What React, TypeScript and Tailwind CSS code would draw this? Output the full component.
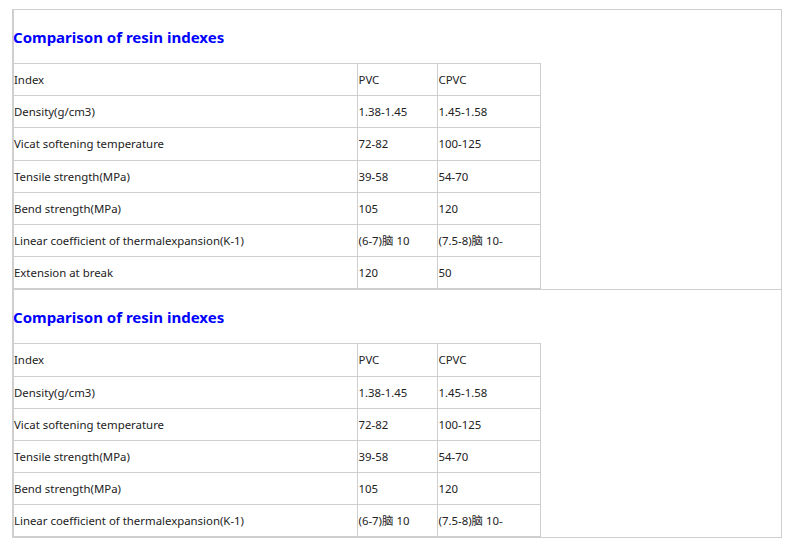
import React from 'react';

const rows: [string, string, string][] = [
  ['Index', 'PVC', 'CPVC'],
  ['Density(g/cm3)', '1.38-1.45', '1.45-1.58'],
  ['Vicat softening temperature', '72-82', '100-125'],
  ['Tensile strength(MPa)', '39-58', '54-70'],
  ['Bend strength(MPa)', '105', '120'],
  ['Linear coefficient of thermalexpansion(K-1)', '(6-7)脑 10', '(7.5-8)脑 10-'],
  ['Extension at break', '120', '50'],
];

const ResinSection = ({ count, first }: { count: number; first?: boolean }) => (
  <div className={`border-l-2 border-r border-b border-[#cfcfcf] ${first ? 'border-t' : ''} pt-[17px]`}>
    <h2 className="text-[15px] leading-[20px] font-bold text-[#0000ff] -ml-px mb-[16px]">
      Comparison of resin indexes
    </h2>
    <table className="border-collapse w-[527px] text-[11.4px] text-[#222]">
      <tbody>
        {rows.slice(0, count).map((r, i) => (
          <tr key={i} className="h-[32.2px]">
            <td className="w-[343px] border border-l-0 border-[#cfcfcf] align-middle">{r[0]}</td>
            <td className="w-[80px] border border-[#cfcfcf] pl-[1px] align-middle">{r[1]}</td>
            <td className="border border-[#cfcfcf] pl-[1px] align-middle">{r[2]}</td>
          </tr>
        ))}
      </tbody>
    </table>
  </div>
);

export default function App() {
  return (
    <div
      className="bg-white w-[794px] h-[546px] overflow-hidden pt-[9px] pl-[12px]"
      style={{ fontFamily: '"Noto Sans", "Noto Sans CJK SC", sans-serif' }}
    >
      <div className="w-[770px]">
        <ResinSection count={7} first />
        <ResinSection count={6} />
      </div>
    </div>
  );
}
